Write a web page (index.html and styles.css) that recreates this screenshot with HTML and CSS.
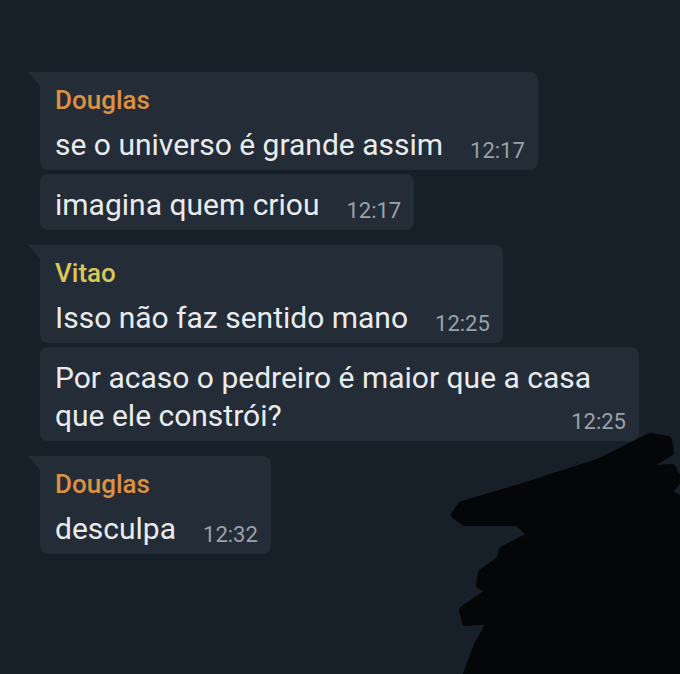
FILE: index.html
```html
<!DOCTYPE html>
<html lang="pt">
<head>
  <meta charset="UTF-8">
  <meta name="viewport" content="width=device-width, initial-scale=1">
  <title>Chat</title>
  <link rel="stylesheet" href="styles.css">
</head>
<body>

<div class="chat">
  <div class="group">
    <div class="bubble first">
      <div class="name douglas">Douglas</div>
      <div class="text">se o universo é grande assim<span class="time">12:17</span></div>
    </div>
    <div class="bubble">
      <div class="text">imagina quem criou<span class="time">12:17</span></div>
    </div>
  </div>

  <div class="group">
    <div class="bubble first">
      <div class="name vitao">Vitao</div>
      <div class="text">Isso não faz sentido mano<span class="time">12:25</span></div>
    </div>
    <div class="bubble wide">
      <div class="text">Por acaso o pedreiro é maior que a casa<br>que ele constrói?<span class="time">12:25</span></div>
    </div>
  </div>

  <div class="group">
    <div class="bubble first">
      <div class="name douglas">Douglas</div>
      <div class="text">desculpa<span class="time">12:32</span></div>
    </div>
  </div>
</div>

<!-- scribble drawn over the screenshot -->
<svg class="scribble" width="680" height="674" viewBox="0 0 680 674">
  <path d="M462 505 L520 488 L600 462 L650 437 L668 440 L670 452 L640 470 L672 468 L678 480 L668 492 L680 500 L680 674 L467 674 L478 645 L492 620 L466 622 L463 610 L492 590 L480 585 L482 573 L500 560 L503 550 L532 535 L518 522 L465 522 L455 515 Z"
        fill="#050607" stroke="#050607" stroke-width="8" stroke-linejoin="round"/>
</svg>

</body>
</html>
```

FILE: styles.css
```css
html, body {
  margin: 0;
  height: 100%;
}
body {
  background: #172029;
  font-family: Roboto, "Noto Sans", sans-serif;
  color: #e9ebed;
  overflow: hidden;
  position: relative;
}
.chat {
  padding: 72px 0 0 40px;
  display: flex;
  flex-direction: column;
  gap: 15px;
}
.group {
  display: flex;
  flex-direction: column;
  align-items: flex-start;
  gap: 4px;
}
.bubble {
  position: relative;
  background: #242c37;
  border-radius: 8px;
  padding: 12px 13px 6px 15px;
}
.bubble.wide {
  min-width: 571px;
}
.bubble.first {
  border-top-left-radius: 0;
}
.bubble.first::before {
  content: "";
  position: absolute;
  left: -12px;
  top: 0;
  border-top: 14px solid #242c37;
  border-left: 12px solid transparent;
}
.name {
  font-size: 26px;
  font-weight: 500;
  line-height: 32px;
  margin-bottom: 10px;
}
.douglas {
  color: #df9142;
}
.vitao {
  color: #d8c85a;
}
.text {
  font-size: 30px;
  line-height: 38px;
}
.time {
  float: right;
  font-size: 22px;
  line-height: 24px;
  margin: 13px 0 0 27px;
  color: #9aa2ab;
}
.scribble {
  position: absolute;
  left: 0;
  top: 0;
}
```
